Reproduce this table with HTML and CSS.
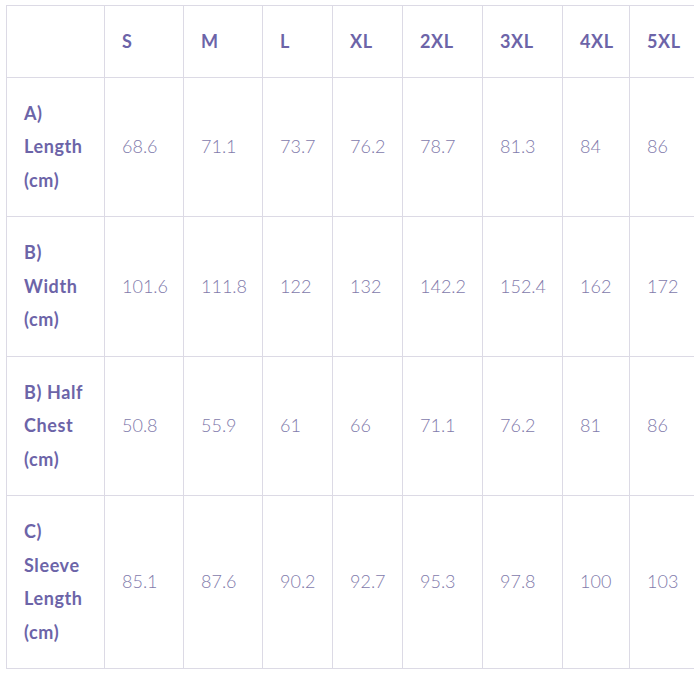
FILE: index.html
```html
<!DOCTYPE html>
<html lang="en">
<head>
<meta charset="utf-8">
<title>Size chart</title>
<link rel="stylesheet" href="styles.css">
</head>
<body>
<div class="chart">
<table class="size-table">
  <colgroup>
    <col class="c-label"><col class="c-s"><col class="c-m"><col class="c-l"><col class="c-xl"><col class="c-2xl"><col class="c-3xl"><col class="c-4xl"><col class="c-5xl">
  </colgroup>
  <thead>
    <tr>
      <th></th><th>S</th><th>M</th><th>L</th><th>XL</th><th>2XL</th><th>3XL</th><th>4XL</th><th>5XL</th>
    </tr>
  </thead>
  <tbody>
    <tr>
      <th>A) Length (cm)</th><td>68.6</td><td>71.1</td><td>73.7</td><td>76.2</td><td>78.7</td><td>81.3</td><td>84</td><td>86</td>
    </tr>
    <tr>
      <th>B) Width (cm)</th><td>101.6</td><td>111.8</td><td>122</td><td>132</td><td>142.2</td><td>152.4</td><td>162</td><td>172</td>
    </tr>
    <tr>
      <th>B) Half Chest (cm)</th><td>50.8</td><td>55.9</td><td>61</td><td>66</td><td>71.1</td><td>76.2</td><td>81</td><td>86</td>
    </tr>
    <tr>
      <th>C) Sleeve Length (cm)</th><td>85.1</td><td>87.6</td><td>90.2</td><td>92.7</td><td>95.3</td><td>97.8</td><td>100</td><td>103</td>
    </tr>
  </tbody>
</table>
</div>
</body>
</html>
```

FILE: styles.css
```css
html, body {
  margin: 0;
  padding: 0;
  background: #ffffff;
}
body {
  overflow: hidden;
}
.chart {
  padding: 5px 0 0 6px;
}
.size-table {
  border-collapse: collapse;
  table-layout: fixed;
  width: 764px;
  font-family: Lato, "Open Sans", sans-serif;
  font-size: 18px;
  line-height: 33.5px;
}
.c-label { width: 98px; }
.c-s { width: 79px; }
.c-m { width: 79px; }
.c-l { width: 70px; }
.c-xl { width: 70px; }
.c-2xl { width: 80px; }
.c-3xl { width: 80px; }
.c-4xl { width: 67px; }
.c-5xl { width: 141px; }
.size-table th,
.size-table td {
  border: 1px solid #dcdae5;
  padding: 19px 17px;
  text-align: left;
  vertical-align: middle;
}
.size-table thead th {
  padding-top: 18.5px;
  padding-bottom: 18.5px;
}
.size-table th {
  font-weight: 700;
  color: #6c64a8;
  letter-spacing: 0.6px;
}
.size-table td {
  font-weight: 300;
  color: #7f7aab;
}
```
